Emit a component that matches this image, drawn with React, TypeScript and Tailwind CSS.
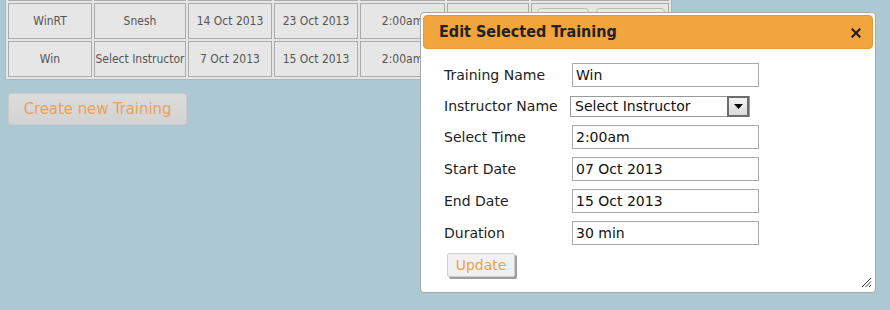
import React from "react";

const rows = [
  { name: "", instructor: "", start: "", end: "", time: "", duration: "" },
  { name: "WinRT", instructor: "Snesh", start: "14 Oct 2013", end: "23 Oct 2013", time: "2:00am", duration: "30 min" },
  { name: "Win", instructor: "Select Instructor", start: "7 Oct 2013", end: "15 Oct 2013", time: "2:00am", duration: "30 min" },
];

const fields = [
  { label: "Select Time", value: "2:00am" },
  { label: "Start Date", value: "07 Oct 2013" },
  { label: "End Date", value: "15 Oct 2013" },
  { label: "Duration", value: "30 min" },
];

const cell = "h-[36px] border border-[#ababab] bg-[#e6e6e6] p-0 text-center align-middle";

function TextBox({ value }: { value: string }) {
  return (
    <div className="flex h-[24px] w-[187px] items-center border border-[#a9a9a9] bg-white pl-[3px] text-[14px] text-[#111]">
      {value}
    </div>
  );
}

export default function App() {
  return (
    <div className="relative h-[310px] w-[890px] overflow-hidden bg-[#acc9d3] font-['DejaVu_Sans',Verdana,sans-serif]">
      <table className="ml-[5px] mt-[-38px] border-separate border-spacing-[2px] border border-[#b4b4b4] bg-[#e6e6e6] font-['DejaVu_Sans_Condensed','Noto_Sans',sans-serif] text-[12px] text-[#555]">
        <tbody>
          {rows.map((r, i) => (
            <tr key={i}>
              <td className={`${cell} w-[84px]`}>{r.name}</td>
              <td className={`${cell} w-[92px] whitespace-nowrap`}>{r.instructor}</td>
              <td className={`${cell} w-[84px]`}>{r.start}</td>
              <td className={`${cell} w-[84px]`}>{r.end}</td>
              <td className={`${cell} w-[85px]`}>{r.time}</td>
              <td className={`${cell} w-[82px]`}>{r.duration}</td>
              <td className={`${cell} w-[138px] text-left`}>
                <div className="flex gap-[7px] pl-[5px]">
                  <span className="h-[26px] w-[52px] rounded-[4px] border border-[#bdbdbd] bg-[#e9e9e9]" />
                  <span className="h-[26px] w-[69px] rounded-[4px] border border-[#bdbdbd] bg-[#e9e9e9]" />
                </div>
              </td>
            </tr>
          ))}
        </tbody>
      </table>

      <button className="ml-[8px] mt-[13px] h-[32px] w-[179px] rounded-[3px] border border-[#c9c9c9] bg-gradient-to-b from-[#dcdcdc] to-[#d3d3d3] font-['DejaVu_Sans_Condensed','Noto_Sans',sans-serif] text-[16.5px] text-[#e6a25a]">
        Create new Training
      </button>

      {/* dialog */}
      <div className="absolute left-[420px] top-[12px] flex h-[281px] w-[456px] flex-col rounded-[4px] border border-[#a8a8a8] bg-white p-[2px]">
        <div className="flex h-[34px] items-center justify-between rounded-[4px] border border-[#e39a38] bg-[#f2a53d] pl-[15px] pr-[11px]">
          <span className="font-['DejaVu_Sans_Condensed','Noto_Sans',sans-serif] text-[16px] font-bold text-[#222]">
            Edit Selected Training
          </span>
          <svg width="10" height="10" viewBox="0 0 10 10" className="mt-[2px]">
            <path d="M1.5 1.5 L8.5 8.5 M8.5 1.5 L1.5 8.5" stroke="#222" strokeWidth="2.2" strokeLinecap="square" />
          </svg>
        </div>

        <div className="flex flex-col pl-[21px] pt-[10px] text-[14px] text-[#222]">
          <div className="flex h-[32px] items-center">
            <span className="w-[128px]">Training Name</span>
            <TextBox value="Win" />
          </div>
          <div className="flex h-[30px] items-center">
            <span className="w-[126px]">Instructor Name</span>
            <div className="flex h-[21px] w-[180px] items-center justify-between border border-[#9a9a9a] bg-white pl-[4px] text-[#111]">
              <span>Select Instructor</span>
              <span className="flex h-[21px] w-[22px] items-center justify-center border-2 border-[#6c6c6c] bg-gradient-to-b from-[#f4f4f4] to-[#d9d9d9]">
                <svg width="9" height="5" viewBox="0 0 9 5">
                  <path d="M0 0 H9 L4.5 5 Z" fill="#000" />
                </svg>
              </span>
            </div>
          </div>
          {fields.map((f) => (
            <div key={f.label} className="flex h-[32px] items-center">
              <span className="w-[128px]">{f.label}</span>
              <TextBox value={f.value} />
            </div>
          ))}
          <div className="mt-[4px]">
            <button className="ml-[3px] h-[24px] w-[68px] rounded-[2px] border border-[#d0d0d0] bg-[#f1f1f1] text-[14px] text-[#f0a043] shadow-[2px_2px_0_#9e9e9e]">
              Update
            </button>
          </div>
        </div>

        <svg width="11" height="11" viewBox="0 0 11 11" className="absolute bottom-[4px] right-[3px]">
          <path d="M10 1 L1 10 M10 4.5 L4.5 10 M10 8 L8 10" stroke="#333" strokeWidth="1" />
        </svg>
      </div>
    </div>
  );
}
